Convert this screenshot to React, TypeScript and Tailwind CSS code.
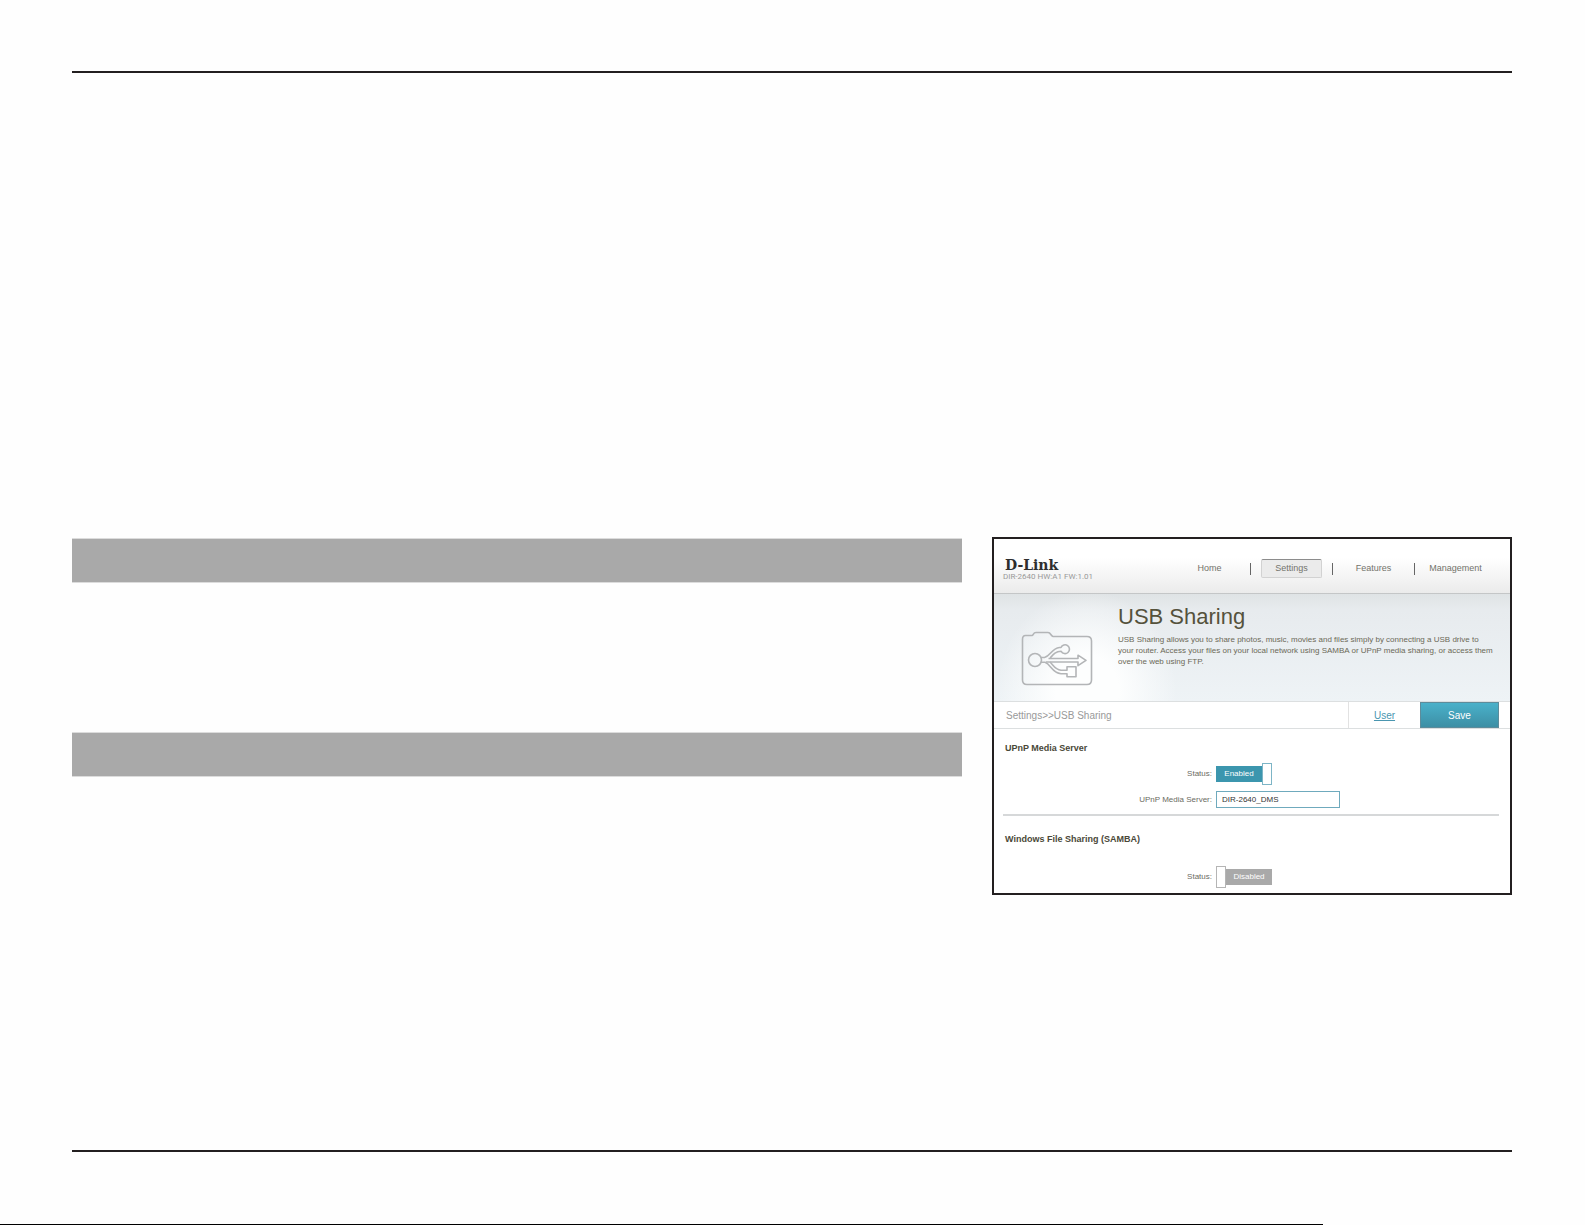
import type { ReactNode } from 'react';
import { useState } from 'react';
import clsx from 'clsx';

const navItems = ['Home', 'Settings', 'Features', 'Management'];

interface StatusToggleProps {
  id: string;
  checked: boolean;
  onChange: (checked: boolean) => void;
}

const StatusToggle = ({ id, checked, onChange }: StatusToggleProps) => (
  <label className={clsx('flex h-[22px] w-14 cursor-pointer items-center', !checked && 'flex-row-reverse')}>
    <input
      id={id}
      type="checkbox"
      className="sr-only"
      checked={checked}
      onChange={(e) => onChange(e.target.checked)}
    />
    <span
      className={clsx(
        'flex h-4 flex-1 items-center justify-center text-[8px] text-white',
        checked ? 'bg-[#3c96ae]' : 'bg-[#a9a9a9]'
      )}
    >
      {checked ? 'Enabled' : 'Disabled'}
    </span>
    <span className={clsx('h-full w-2.5 border bg-white', checked ? 'border-[#7db5c6]' : 'border-[#b5b5b5]')} />
  </label>
);

interface FieldProps {
  id: string;
  label: string;
  children: ReactNode;
}

const Field = ({ id, label, children }: FieldProps) => (
  <div className="flex items-center gap-1">
    <label htmlFor={id} className="w-[209px] text-right text-[8px] text-[#6b6b5f]">
      {label}:
    </label>
    {children}
  </div>
);

const UsbFolderIcon = () => (
  <svg viewBox="0 0 72 56" className="h-14 w-[72px]" fill="none" stroke="#b3b5b7" strokeWidth="1.6" strokeLinejoin="round">
    <path d="M1.5 8.5c0-3 1-4 3-4h6.500c1.500 0 1-3 4-3h12c3 0 2.500 3.500 5 4h34c3 0 4.500 1.500 4.500 4.500v39c0 3-1.500 4.500-4.500 4.500h-60c-3 0-4.500-1.500-4.500-4.500z" />
    {/* upper branch, ending in a disc */}
    <path d="M19.500 26.500h4c6-1.500 7-9 15-10h1.500a4.400 4.400 0 1 1 .2 3.800c-6 .2-8 3.200-11 6.700" />
    {/* centre line and arrow head */}
    <path d="M27.500 27.500h29.500v-3.300l8 5.200-8 5.300v-3.700h-32" />
    {/* lower branch, ending in a square */}
    <path d="M29 31c4 4 5 7.500 11 8.200h6v-3.500h9v10h-9v-3h-6c-9-.7-10-9.200-16-11.400h-4.500" />
    <circle cx="14" cy="29" r="6.500" />
  </svg>
);

const RouterPanel = () => {
  const [upnp, setUpnp] = useState(true);
  const [samba, setSamba] = useState(false);
  const [serverName, setServerName] = useState('DIR-2640_DMS');

  return (
    <section className="w-[520px] shrink-0 border-2 border-[#231f20] bg-white pb-[5px]">
      <header className="flex h-[55px] justify-between border-b border-[#c4c6c7] bg-linear-to-b from-white from-35% to-[#ebebeb] pr-3.5 pl-[9px]">
        <div className="pt-[19px]">
          <div className="pl-0.5 font-['DejaVu_Serif',serif] text-[14px] leading-[14px] font-black text-[#2e2e2e]">D-Link</div>
          <div className="font-[Roboto,sans-serif] text-[8px] leading-[9px] text-[#999]">DIR-2640 HW:A1 FW:1.01</div>
        </div>
        <nav className="flex pt-5">
          {navItems.map((item, index) => (
            <div key={item} className="flex h-[19px] w-[82px] items-center">
              <span className={clsx('h-3 w-px', index > 0 && 'bg-[#666]')} />
              <a
                href="#"
                className={clsx(
                  'mx-2.5 flex h-[19px] flex-1 items-center justify-center text-[9px] text-[#73736b]',
                  item === 'Settings' && 'rounded-[2px] border border-[#d2d2d2] border-t-[#8c8c8c] bg-[#ebebeb]'
                )}
              >
                {item}
              </a>
            </div>
          ))}
        </nav>
      </header>

      <div className="flex h-[107px] bg-[radial-gradient(ellipse_90px_100px_at_18%_90%,#fdfefe_0%,#fdfefe_35%,#fdfefe00_100%),linear-gradient(#dfe3e5,#e7ebee_15%,#eef3f6)] pr-2.5">
        <div className="w-[124px] pt-[37px] pl-[27px]">
          <UsbFolderIcon />
        </div>
        <div className="flex-1 pt-2.5 text-[#55523c]">
          <h1 className="text-[22px] leading-[26px]">USB Sharing</h1>
          <p className="mt-1 text-[8px] leading-[11px] text-[#6b6957]">
            USB Sharing allows you to share photos, music, movies and files simply by connecting a USB drive to
            <br />
            your router. Access your files on your local network using SAMBA or UPnP media sharing, or access them
            <br />
            over the web using FTP.
          </p>
        </div>
      </div>

      <div className="flex h-7 border-y border-[#dcdfe0] pr-[11px] pl-3">
        <div className="flex flex-1 items-center text-[10px] text-[#999]">Settings&gt;&gt;USB Sharing</div>
        <a
          href="#"
          className="flex w-[72px] items-center justify-center border-l border-[#e2e2e2] text-[10px] text-[#4a96b0] underline"
        >
          User
        </a>
        <button
          type="button"
          className="w-[79px] cursor-pointer border border-[#5d8c9b] bg-linear-to-b from-[#49b1ca] to-[#3d8fa5] text-[10px] text-white"
        >
          Save
        </button>
      </div>

      <div className="pr-[11px] pl-[9px]">
        <h2 className="mt-3 pl-0.5 text-[9px] leading-[14px] font-bold text-[#4a4838]">UPnP Media Server</h2>
        <div className="mt-2 flex flex-col gap-1.5">
          <Field id="upnp-status" label="Status">
            <StatusToggle id="upnp-status" checked={upnp} onChange={setUpnp} />
          </Field>
          <Field id="server-name" label="UPnP Media Server">
            <input
              id="server-name"
              type="text"
              value={serverName}
              onChange={(e) => setServerName(e.target.value)}
              className="h-[17px] w-[124px] border border-[#6faabd] px-[5px] text-[8px] text-[#333]"
            />
          </Field>
        </div>
        <hr className="mt-1.5 border-t-2 border-[#d6d8d9]" />
        <h2 className="mt-4 pl-0.5 text-[9px] leading-[14px] font-bold text-[#4a4838]">Windows File Sharing (SAMBA)</h2>
        <div className="mt-5">
          <Field id="samba-status" label="Status">
            <StatusToggle id="samba-status" checked={samba} onChange={setSamba} />
          </Field>
        </div>
      </div>
    </section>
  );
};

const App = () => (
  <div className="flex min-h-screen flex-col bg-[#fefefe] pt-[71px] font-['Liberation_Sans',Arial,sans-serif]">
    <main className="mr-[73px] ml-[72px] flex flex-1 flex-col border-t-2 border-[#231f20] pt-[464px]">
      <div className="flex items-start gap-[30px]">
        <div className="flex flex-1 flex-col gap-[149px] pt-px">
          <div className="h-[45px] border-y border-[#dcdcdc] bg-[#a9a9a9]" />
          <div className="h-[45px] border-y border-[#dcdcdc] bg-[#a9a9a9]" />
        </div>
        <RouterPanel />
      </div>
    </main>
    <footer className="mt-auto">
      <hr className="mr-[73px] ml-[72px] border-t-2 border-[#231f20]" />
      <hr className="mt-[72px] w-[83.5%] border-t border-black" />
    </footer>
  </div>
);

export default App;
